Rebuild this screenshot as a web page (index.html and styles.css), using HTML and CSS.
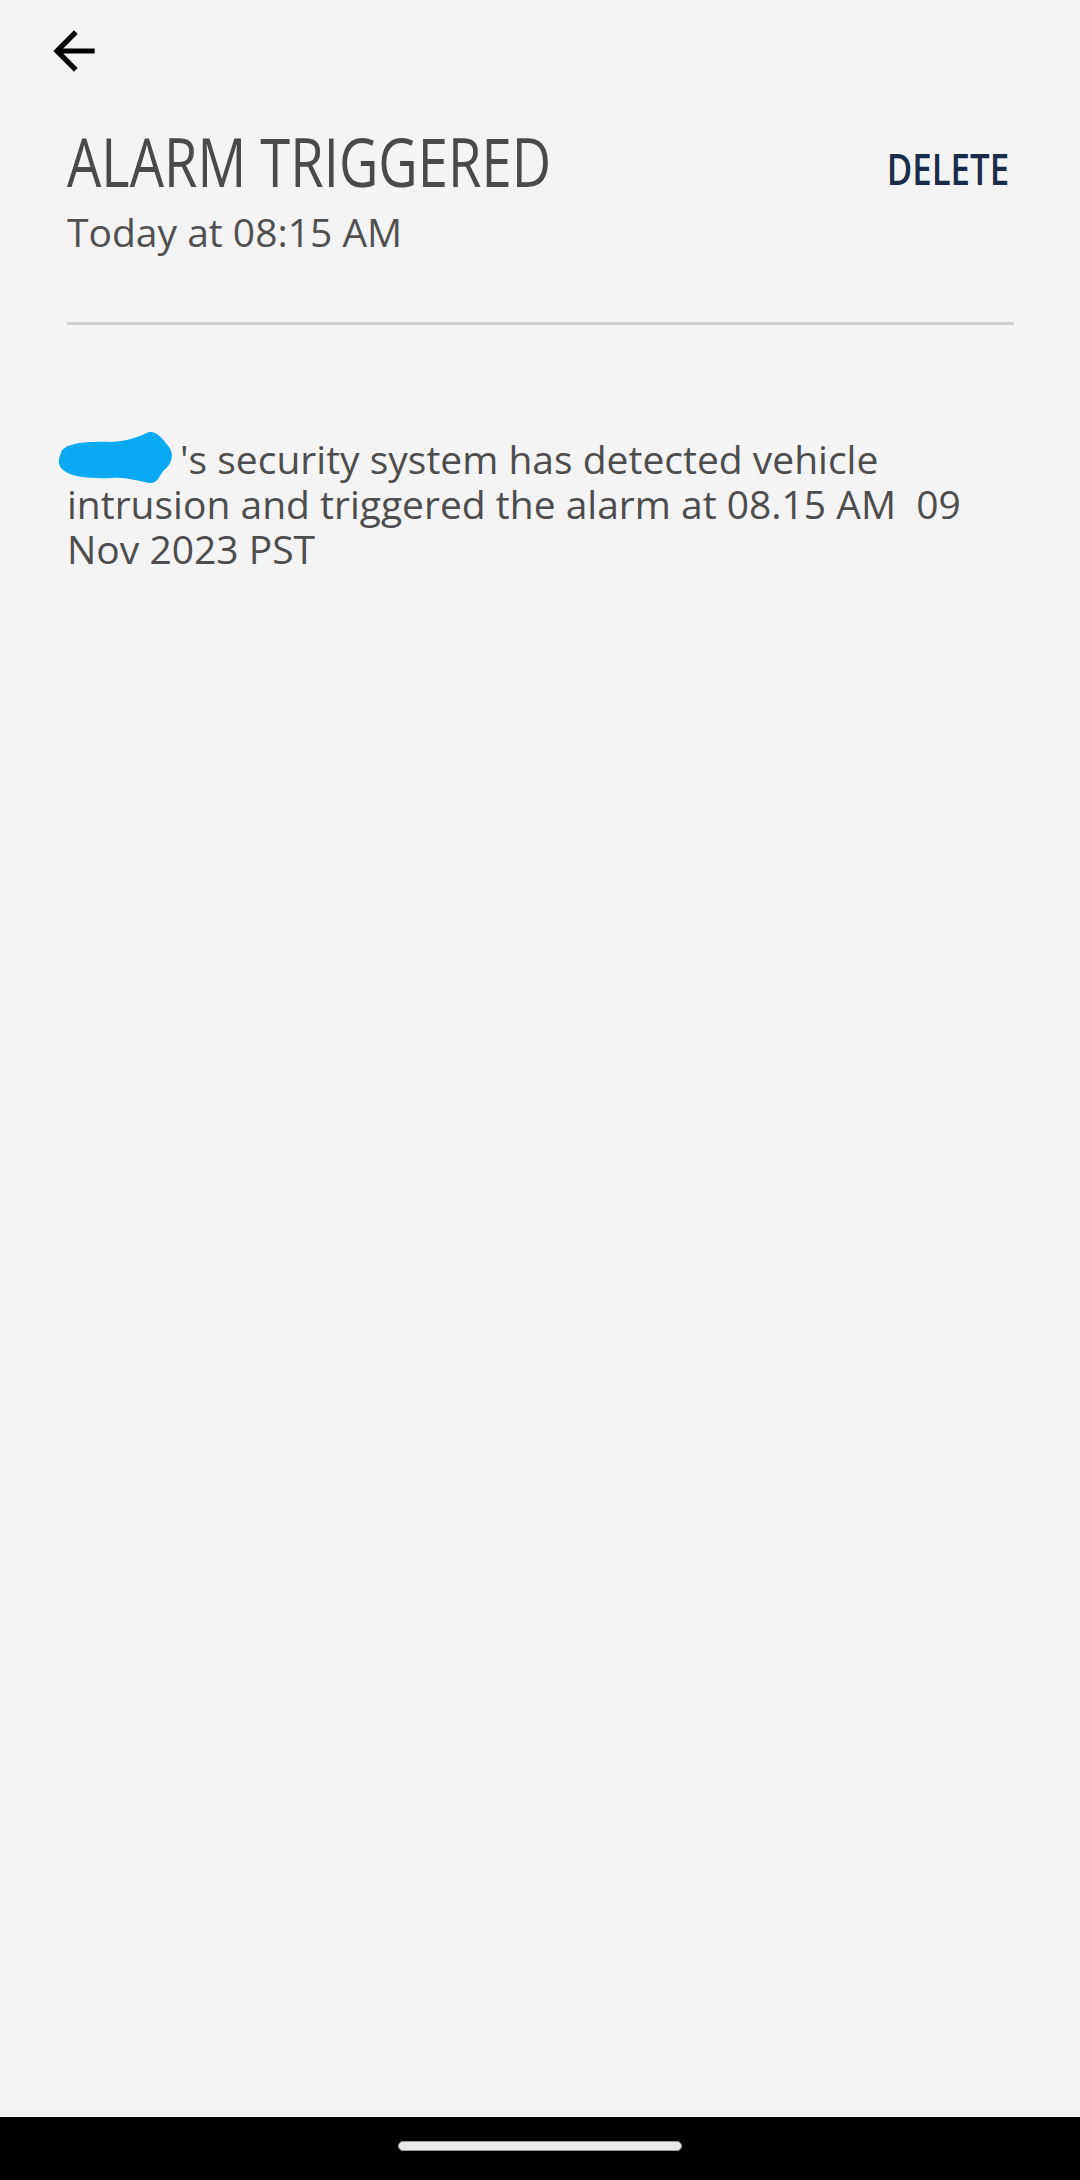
FILE: index.html
```html
<!DOCTYPE html>
<html lang="en">
<head>
    <meta charset="UTF-8">
    <meta name="viewport" content="width=device-width, initial-scale=1.0">
    <title>Alarm Triggered</title>
    <link rel="stylesheet" href="styles.css">
</head>
<body>
    <div class="screen">
        <div class="top-bar">
            <button class="back" aria-label="Back">
                <svg viewBox="0 0 24 24" width="62" height="62">
                    <path d="M20 11H7.83l5.59-5.59L12 4l-8 8 8 8 1.41-1.41L7.83 13H20v-2z" fill="#000"/>
                </svg>
            </button>
        </div>

        <div class="content">
            <div class="header">
                <div class="heading">
                    <h1 class="title">ALARM TRIGGERED</h1>
                    <p class="time">Today at 08:15 AM</p>
                </div>
                <button class="delete">DELETE</button>
            </div>

            <hr class="divider">

            <!-- vehicle name is scribbled out in the screenshot -->
            <p class="message"><span class="name"><svg class="scribble" viewBox="0 0 117 53" width="117" height="53"><path d="M4 22 C6 12 30 10 55 11 C70 10 82 6 92 1 C100 0 106 8 112 16 C118 24 114 34 106 40 C102 46 100 53 92 52 C80 50 70 46 55 47 C35 48 12 46 5 38 C0 33 2 27 4 22 Z" fill="#0aa9f4"/></svg></span>'s security system has detected vehicle intrusion and triggered the alarm at 08.15 AM&nbsp; 09 Nov 2023 PST</p>
        </div>

        <div class="nav-bar">
            <div class="home-pill"></div>
        </div>
    </div>
</body>
</html>
```

FILE: styles.css
```css
body {
    margin: 0;
    background-color: #f4f4f4;
    font-family: "Open Sans", "Noto Sans", Arial, sans-serif;
    color: #4d4d4d;
}
.screen {
    display: flex;
    flex-direction: column;
    min-height: 2180px;
}
.top-bar {
    padding: 20px 0 0 43px;
}
.back {
    display: block;
    width: 62px;
    height: 62px;
    padding: 0;
    border: none;
    background: none;
}
.back svg {
    display: block;
}
.content {
    flex: 1;
    padding: 0 66px 0 67px;
}
.header {
    display: flex;
    justify-content: space-between;
    align-items: flex-start;
    margin-top: 46px;
}
/* the app uses a condensed face; squeeze Open Sans to match */
.title {
    margin: 0;
    font-weight: normal;
    font-size: 67px;
    line-height: 67px;
    color: #4a4a4a;
    transform: scaleX(0.81);
    transform-origin: left center;
}
.time {
    margin: 13px 0 0;
    font-size: 39px;
    line-height: 48px;
    color: #505050;
}
.delete {
    margin: 20px 5px 0 0;
    padding: 0;
    border: none;
    background: none;
    font-family: "Open Sans", sans-serif;
    font-weight: 600;
    font-size: 43px;
    line-height: 42px;
    color: #1b2b4b;
    transform: scaleX(0.81);
    transform-origin: right center;
}
.divider {
    margin: 66px 0 0;
    border: none;
    height: 3px;
    background-color: #d0d0d0;
}
.message {
    margin: 111px 0 0;
    font-size: 39px;
    line-height: 45px;
    color: #4d4d4d;
}
.name {
    position: relative;
    display: inline-block;
    width: 113px;
    height: 1px;
}
.scribble {
    position: absolute;
    left: -10px;
    top: -42px;
}
.nav-bar {
    height: 63px;
    background-color: #000;
    display: flex;
    justify-content: center;
    align-items: center;
}
.home-pill {
    width: 282px;
    height: 8px;
    margin-top: -6px;
    border: 1px solid #9a9a9a;
    border-radius: 5px;
    background-color: #e8e8e8;
}
```
